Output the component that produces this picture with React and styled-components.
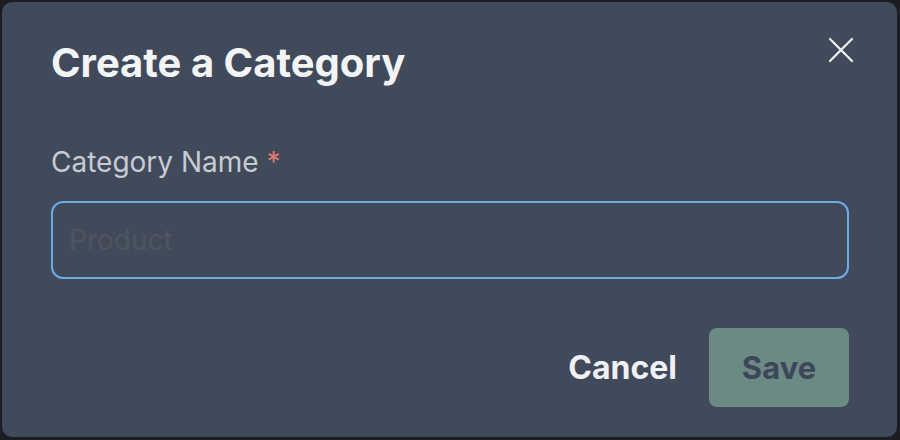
import React from "react";
import styled, { createGlobalStyle } from "styled-components";

const GlobalStyle = createGlobalStyle`
    html, body {
        margin: 0;
        padding: 0;
        background: #1b1d22;
    }
    body {
        font-family: Inter, "Noto Sans", "Liberation Sans", sans-serif;
    }
`;

const Backdrop = styled.div`
    width: 900px;
    height: 440px;
    box-sizing: border-box;
    padding: 2px 3px 3px 2px;
    background: #1b1d22;
    display: flex;
`;

const Modal = styled.div`
    position: relative;
    flex: 1;
    display: flex;
    flex-direction: column;
    box-sizing: border-box;
    padding: 37px 48px 30px 49px;
    border-radius: 10px;
    background: #404a5b;
`;

const Title = styled.h2`
    margin: 0;
    font-size: 40px;
    line-height: 48px;
    font-weight: 700;
    color: #f3f4f6;
`;

const CloseButton = styled.button`
    position: absolute;
    top: 34px;
    right: 42px;
    width: 28px;
    height: 28px;
    padding: 0;
    border: none;
    background: transparent;
    display: flex;
    align-items: center;
    justify-content: center;
    cursor: pointer;
`;

const Field = styled.div`
    display: flex;
    flex-direction: column;
    gap: 21px;
    margin-top: 57px;
`;

const Label = styled.label`
    font-size: 28px;
    line-height: 36px;
    color: #c8cbd2;
`;

const Required = styled.span`
    color: #df7a6e;
    margin-left: 8px;
`;

const Input = styled.input`
    height: 78px;
    box-sizing: border-box;
    padding: 0 16px;
    border: 2px solid #6aade6;
    border-radius: 12px;
    background: transparent;
    font-family: inherit;
    font-size: 28px;
    color: #e5e7eb;
    outline: none;
    &::placeholder {
        color: #50545e;
    }
`;

const Footer = styled.div`
    display: flex;
    justify-content: flex-end;
    align-items: center;
    gap: 32px;
    margin-top: 49px;
`;

const Button = styled.button`
    height: 79px;
    padding: 0 ${(p) => (p.$primary ? "32px" : "0")};
    min-width: ${(p) => (p.$primary ? "140px" : "0")};
    border: none;
    border-radius: 8px;
    background: ${(p) => (p.$primary ? "#6b8a84" : "transparent")};
    color: ${(p) => (p.$primary ? "#3d4759" : "#eef0f3")};
    font-family: inherit;
    font-size: ${(p) => (p.$primary ? "31px" : "32px")};
    font-weight: 700;
    cursor: pointer;
`;

const App = () => {
    return (
        <>
            <GlobalStyle />
            <Backdrop>
                <Modal>
                    <Title>Create a Category</Title>
                    <CloseButton aria-label="Close">
                        <svg width="26" height="26" viewBox="0 0 26 26" fill="none">
                            <path d="M2 2L24 24M24 2L2 24" stroke="#f3f4f6" strokeWidth="2.2" strokeLinecap="round" />
                        </svg>
                    </CloseButton>
                    <Field>
                        <Label>
                            Category Name<Required>*</Required>
                        </Label>
                        <Input placeholder="Product" />
                    </Field>
                    <Footer>
                        <Button>Cancel</Button>
                        <Button $primary>Save</Button>
                    </Footer>
                </Modal>
            </Backdrop>
        </>
    );
};

export default App;
